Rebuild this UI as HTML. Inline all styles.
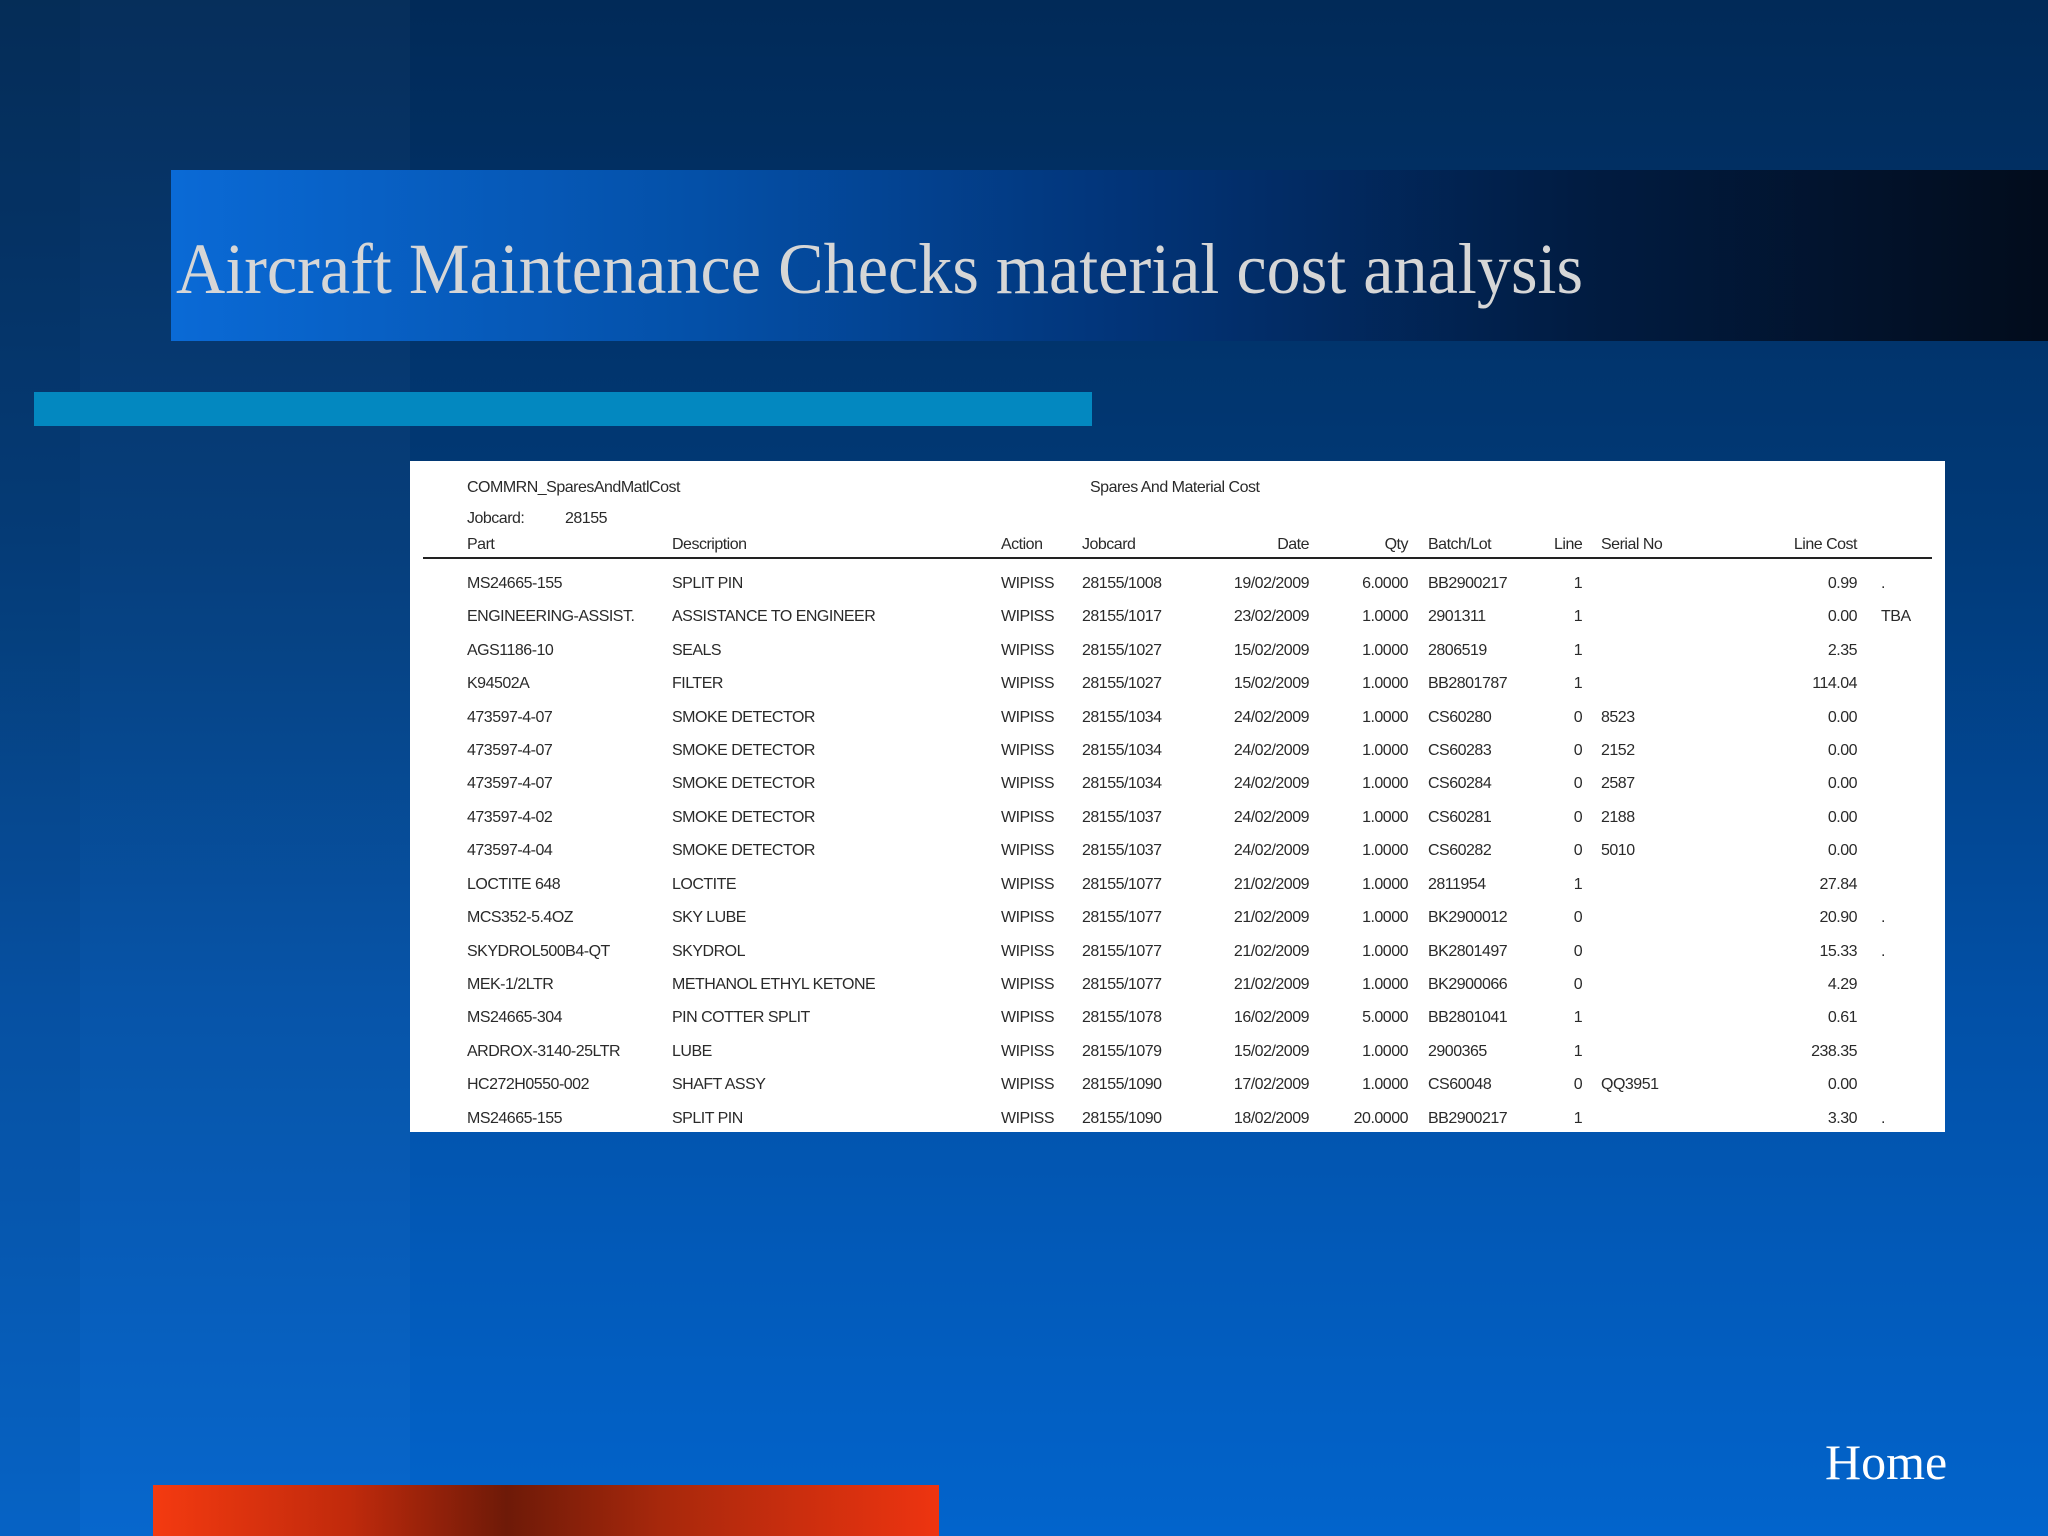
<!DOCTYPE html>
<html><head><meta charset="utf-8"><style>
html,body{margin:0;padding:0}
body{width:2048px;height:1536px;position:relative;overflow:hidden;background:linear-gradient(180deg,#012a58 0%,#013a78 35%,#0250a6 65%,#0264cc 100%);font-family:"Liberation Sans",Arial,sans-serif}
.lp{position:absolute;left:0;top:0;width:410px;height:1536px;background:rgba(255,255,255,0.025)}
.lp2{position:absolute;left:0;top:0;width:80px;height:1536px;background:rgba(0,0,0,0.04)}
.band{position:absolute;left:171px;top:170px;width:1877px;height:171px;background:linear-gradient(90deg,#0a6ad6 0%,#0450a8 28%,#02357a 50%,#011c42 75%,#020c1c 100%)}
.cyan{position:absolute;left:34px;top:392px;width:1058px;height:34px;background:#0388c0}
.red{position:absolute;left:153px;top:1485px;width:786px;height:51px;background:linear-gradient(90deg,#f43a10 0%,#c02a0c 25%,#6e1a08 45%,#a8280c 65%,#ee3410 100%)}
.home{position:absolute;left:1825px;top:1432px;color:#fff;font-family:"Liberation Serif",serif;font-size:50px;line-height:60px}
.tbl{position:absolute;left:410px;top:461px;width:1535px;height:671px;background:#fff}
.hr{position:absolute;left:423px;top:557px;width:1509px;height:2px;background:#222}
.r{position:absolute;left:0;width:2048px;height:20px;line-height:20px;font-size:16px;color:#2a2a2a;letter-spacing:-0.5px}
.r span{position:absolute;white-space:nowrap}
.p{left:467px}.d{left:672px}.a{left:1001px}.j{left:1082px}
.dt{left:1200px;width:109px;text-align:right}
.q{left:1320px;width:88px;text-align:right}
.b{left:1428px}.l{left:1563px;width:30px;text-align:center}
.s{left:1601px}.c{left:1740px;width:117px;text-align:right}.x{left:1881px}
</style></head><body>
<div class="lp"></div><div class="lp2"></div>
<div class="band"></div>
<svg style="position:absolute;left:0;top:0" width="2048" height="400"><text x="176" y="293" font-family="Liberation Serif,serif" font-size="72" fill="#d6d6d6" textLength="1407" lengthAdjust="spacingAndGlyphs">Aircraft Maintenance Checks material cost analysis</text></svg>
<div class="cyan"></div>
<div class="tbl"></div>
<div class="r" style="top:478px"><span class="p">COMMRN_SparesAndMatlCost</span><span style="left:1090px">Spares And Material Cost</span></div>
<div class="r" style="top:509px"><span class="p">Jobcard:</span><span style="left:565px">28155</span></div>
<div class="r" style="top:535px"><span class="p">Part</span><span class="d">Description</span><span class="a">Action</span><span class="j">Jobcard</span><span class="dt">Date</span><span class="q">Qty</span><span class="b">Batch/Lot</span><span style="left:1554px">Line</span><span class="s">Serial No</span><span class="c">Line Cost</span></div>
<div class="hr"></div>
<div class="r" style="top:574px"><span class="p">MS24665-155</span><span class="d">SPLIT PIN</span><span class="a">WIPISS</span><span class="j">28155/1008</span><span class="dt">19/02/2009</span><span class="q">6.0000</span><span class="b">BB2900217</span><span class="l">1</span><span class="c">0.99</span><span class="x">.</span></div>
<div class="r" style="top:607px"><span class="p">ENGINEERING-ASSIST.</span><span class="d">ASSISTANCE TO ENGINEER</span><span class="a">WIPISS</span><span class="j">28155/1017</span><span class="dt">23/02/2009</span><span class="q">1.0000</span><span class="b">2901311</span><span class="l">1</span><span class="c">0.00</span><span class="x">TBA</span></div>
<div class="r" style="top:641px"><span class="p">AGS1186-10</span><span class="d">SEALS</span><span class="a">WIPISS</span><span class="j">28155/1027</span><span class="dt">15/02/2009</span><span class="q">1.0000</span><span class="b">2806519</span><span class="l">1</span><span class="c">2.35</span></div>
<div class="r" style="top:674px"><span class="p">K94502A</span><span class="d">FILTER</span><span class="a">WIPISS</span><span class="j">28155/1027</span><span class="dt">15/02/2009</span><span class="q">1.0000</span><span class="b">BB2801787</span><span class="l">1</span><span class="c">114.04</span></div>
<div class="r" style="top:708px"><span class="p">473597-4-07</span><span class="d">SMOKE DETECTOR</span><span class="a">WIPISS</span><span class="j">28155/1034</span><span class="dt">24/02/2009</span><span class="q">1.0000</span><span class="b">CS60280</span><span class="l">0</span><span class="s">8523</span><span class="c">0.00</span></div>
<div class="r" style="top:741px"><span class="p">473597-4-07</span><span class="d">SMOKE DETECTOR</span><span class="a">WIPISS</span><span class="j">28155/1034</span><span class="dt">24/02/2009</span><span class="q">1.0000</span><span class="b">CS60283</span><span class="l">0</span><span class="s">2152</span><span class="c">0.00</span></div>
<div class="r" style="top:774px"><span class="p">473597-4-07</span><span class="d">SMOKE DETECTOR</span><span class="a">WIPISS</span><span class="j">28155/1034</span><span class="dt">24/02/2009</span><span class="q">1.0000</span><span class="b">CS60284</span><span class="l">0</span><span class="s">2587</span><span class="c">0.00</span></div>
<div class="r" style="top:808px"><span class="p">473597-4-02</span><span class="d">SMOKE DETECTOR</span><span class="a">WIPISS</span><span class="j">28155/1037</span><span class="dt">24/02/2009</span><span class="q">1.0000</span><span class="b">CS60281</span><span class="l">0</span><span class="s">2188</span><span class="c">0.00</span></div>
<div class="r" style="top:841px"><span class="p">473597-4-04</span><span class="d">SMOKE DETECTOR</span><span class="a">WIPISS</span><span class="j">28155/1037</span><span class="dt">24/02/2009</span><span class="q">1.0000</span><span class="b">CS60282</span><span class="l">0</span><span class="s">5010</span><span class="c">0.00</span></div>
<div class="r" style="top:875px"><span class="p">LOCTITE 648</span><span class="d">LOCTITE</span><span class="a">WIPISS</span><span class="j">28155/1077</span><span class="dt">21/02/2009</span><span class="q">1.0000</span><span class="b">2811954</span><span class="l">1</span><span class="c">27.84</span></div>
<div class="r" style="top:908px"><span class="p">MCS352-5.4OZ</span><span class="d">SKY LUBE</span><span class="a">WIPISS</span><span class="j">28155/1077</span><span class="dt">21/02/2009</span><span class="q">1.0000</span><span class="b">BK2900012</span><span class="l">0</span><span class="c">20.90</span><span class="x">.</span></div>
<div class="r" style="top:942px"><span class="p">SKYDROL500B4-QT</span><span class="d">SKYDROL</span><span class="a">WIPISS</span><span class="j">28155/1077</span><span class="dt">21/02/2009</span><span class="q">1.0000</span><span class="b">BK2801497</span><span class="l">0</span><span class="c">15.33</span><span class="x">.</span></div>
<div class="r" style="top:975px"><span class="p">MEK-1/2LTR</span><span class="d">METHANOL ETHYL KETONE</span><span class="a">WIPISS</span><span class="j">28155/1077</span><span class="dt">21/02/2009</span><span class="q">1.0000</span><span class="b">BK2900066</span><span class="l">0</span><span class="c">4.29</span></div>
<div class="r" style="top:1008px"><span class="p">MS24665-304</span><span class="d">PIN COTTER SPLIT</span><span class="a">WIPISS</span><span class="j">28155/1078</span><span class="dt">16/02/2009</span><span class="q">5.0000</span><span class="b">BB2801041</span><span class="l">1</span><span class="c">0.61</span></div>
<div class="r" style="top:1042px"><span class="p">ARDROX-3140-25LTR</span><span class="d">LUBE</span><span class="a">WIPISS</span><span class="j">28155/1079</span><span class="dt">15/02/2009</span><span class="q">1.0000</span><span class="b">2900365</span><span class="l">1</span><span class="c">238.35</span></div>
<div class="r" style="top:1075px"><span class="p">HC272H0550-002</span><span class="d">SHAFT ASSY</span><span class="a">WIPISS</span><span class="j">28155/1090</span><span class="dt">17/02/2009</span><span class="q">1.0000</span><span class="b">CS60048</span><span class="l">0</span><span class="s">QQ3951</span><span class="c">0.00</span></div>
<div class="r" style="top:1109px"><span class="p">MS24665-155</span><span class="d">SPLIT PIN</span><span class="a">WIPISS</span><span class="j">28155/1090</span><span class="dt">18/02/2009</span><span class="q">20.0000</span><span class="b">BB2900217</span><span class="l">1</span><span class="c">3.30</span><span class="x">.</span></div>
<div class="red"></div>
<div class="home">Home</div>
</body></html>
